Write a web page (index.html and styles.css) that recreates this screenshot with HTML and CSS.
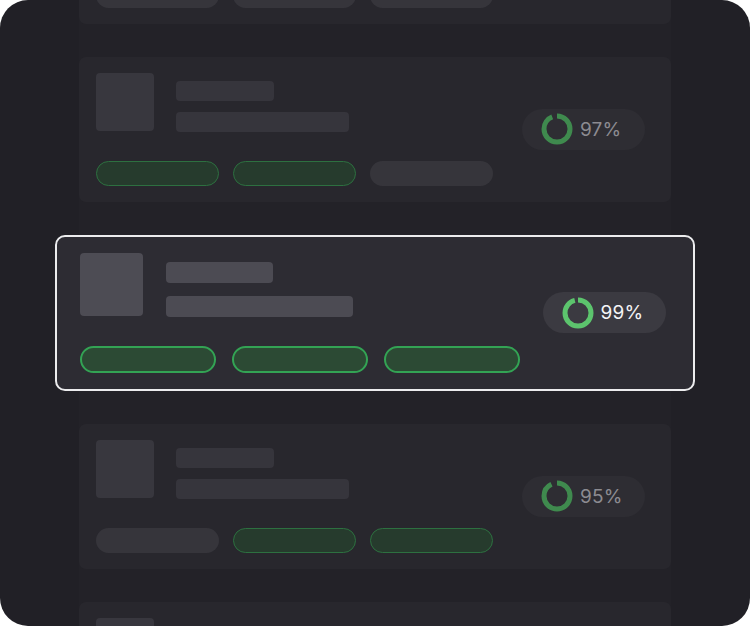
FILE: index.html
```html
<!DOCTYPE html>
<html>
<head>
<meta charset="utf-8">
<link rel="stylesheet" href="styles.css">
</head>
<body>
<div class="frame">
  <div class="column">
    <div class="list">
      <div class="card dim">
        <div class="main">
          <div class="top"><div class="thumb"></div><div class="lines"><div class="l1"></div><div class="l2"></div></div></div>
          <div class="pills"><div class="pill grey"></div><div class="pill grey"></div><div class="pill grey"></div></div>
        </div>
      </div>

      <div class="card dim">
        <div class="main">
          <div class="top"><div class="thumb"></div><div class="lines"><div class="l1"></div><div class="l2"></div></div></div>
          <div class="pills"><div class="pill green"></div><div class="pill green"></div><div class="pill grey"></div></div>
        </div>
        <div class="badge"><svg class="ring" viewBox="0 0 32 32"><circle cx="16" cy="16" r="13" pathLength="100" stroke-dasharray="94 6"/></svg><span>97%</span></div>
      </div>

      <div class="card active">
        <div class="main">
          <div class="top"><div class="thumb"></div><div class="lines"><div class="l1"></div><div class="l2"></div></div></div>
          <div class="pills"><div class="pill green"></div><div class="pill green"></div><div class="pill green"></div></div>
        </div>
        <div class="badge"><svg class="ring" viewBox="0 0 32 32"><circle cx="16" cy="16" r="13" pathLength="100" stroke-dasharray="96 4"/></svg><span>99%</span></div>
      </div>

      <div class="card dim">
        <div class="main">
          <div class="top"><div class="thumb"></div><div class="lines"><div class="l1"></div><div class="l2"></div></div></div>
          <div class="pills"><div class="pill grey"></div><div class="pill green"></div><div class="pill green"></div></div>
        </div>
        <div class="badge"><svg class="ring" viewBox="0 0 32 32"><circle cx="16" cy="16" r="13" pathLength="100" stroke-dasharray="93 7"/></svg><span>95%</span></div>
      </div>

      <div class="card dim">
        <div class="main">
          <div class="top"><div class="thumb"></div><div class="lines"><div class="l1"></div><div class="l2"></div></div></div>
          <div class="pills"><div class="pill green"></div><div class="pill grey"></div><div class="pill green"></div></div>
        </div>
      </div>
    </div>
  </div>
</div>
</body>
</html>
```

FILE: styles.css
```css
html, body {
  margin: 0;
  padding: 0;
  background: #ffffff;
}

.frame {
  width: 750px;
  height: 626px;
  border-radius: 28px;
  background: #212026;
  overflow: hidden;
  display: flex;
  justify-content: center;
  font-family: Inter, "Liberation Sans", sans-serif;
}

.column {
  width: 592px;
  height: 100%;
  background: #232228;
  display: flex;
  flex-direction: column;
  align-items: center;
}

.list {
  margin-top: -121px;
  display: flex;
  flex-direction: column;
  align-items: center;
  gap: 33px;
}

.card {
  box-sizing: border-box;
  display: flex;
  align-items: center;
  justify-content: space-between;
  flex-shrink: 0;
}

.main {
  display: flex;
  flex-direction: column;
}

.top {
  display: flex;
}

.lines {
  display: flex;
  flex-direction: column;
}

.pills {
  display: flex;
}

.pill {
  box-sizing: border-box;
  border-radius: 999px;
}

.badge {
  display: flex;
  align-items: center;
  box-sizing: border-box;
  width: 123px;
  height: 41px;
  border-radius: 999px;
  padding-left: 19px;
  gap: 7px;
  font-size: 19px;
  letter-spacing: 0.2px;
}

.ring {
  width: 32px;
  height: 32px;
  transform: rotate(-90deg);
}

.ring circle {
  fill: none;
  stroke-width: 5;
}

/* dimmed cards */
.dim {
  width: 592px;
  height: 145px;
  background: #28272d;
  border-radius: 7px;
  padding: 16px 26px 17px 17px;
}

.dim .thumb {
  width: 58px;
  height: 58px;
  border-radius: 4px;
  background: #38373e;
}

.dim .lines {
  margin-left: 22px;
  padding-top: 8px;
}

.dim .l1 {
  width: 98px;
  height: 20px;
  border-radius: 4px;
  background: #36353c;
}

.dim .l2 {
  width: 173px;
  height: 20px;
  border-radius: 4px;
  background: #36353c;
  margin-top: 11px;
}

.dim .pills {
  margin-top: 29px;
  gap: 14px;
}

.dim .pill {
  width: 123px;
  height: 25px;
}

.dim .pill.green {
  background: #263b2d;
  border: 1.5px solid #2d7040;
}

.dim .pill.grey {
  background: #36353b;
}

.dim .badge {
  background: #2e2d33;
  color: #8c8b91;
}

.dim .ring circle {
  stroke: #3f8a4e;
}

/* highlighted card */
.active {
  width: 640px;
  height: 156px;
  background: #2d2c33;
  border: 2px solid #ececee;
  border-radius: 10px;
  padding: 16px 27.5px 17px 23px;
}

.active .thumb {
  width: 63px;
  height: 63px;
  border-radius: 4px;
  background: #4d4c54;
}

.active .lines {
  margin-left: 23px;
  padding-top: 9px;
}

.active .l1 {
  width: 107px;
  height: 21px;
  border-radius: 4px;
  background: #4c4b53;
}

.active .l2 {
  width: 187px;
  height: 21px;
  border-radius: 4px;
  background: #4c4b53;
  margin-top: 13px;
}

.active .pills {
  margin-top: 29px;
  gap: 16px;
}

.active .pill {
  width: 136px;
  height: 27px;
}

.active .pill.green {
  background: #2c4a34;
  border: 2px solid #33a354;
}

.active .badge {
  background: #3b3a41;
  color: #f4f4f6;
}

.active .ring circle {
  stroke: #5cc46d;
}
```
